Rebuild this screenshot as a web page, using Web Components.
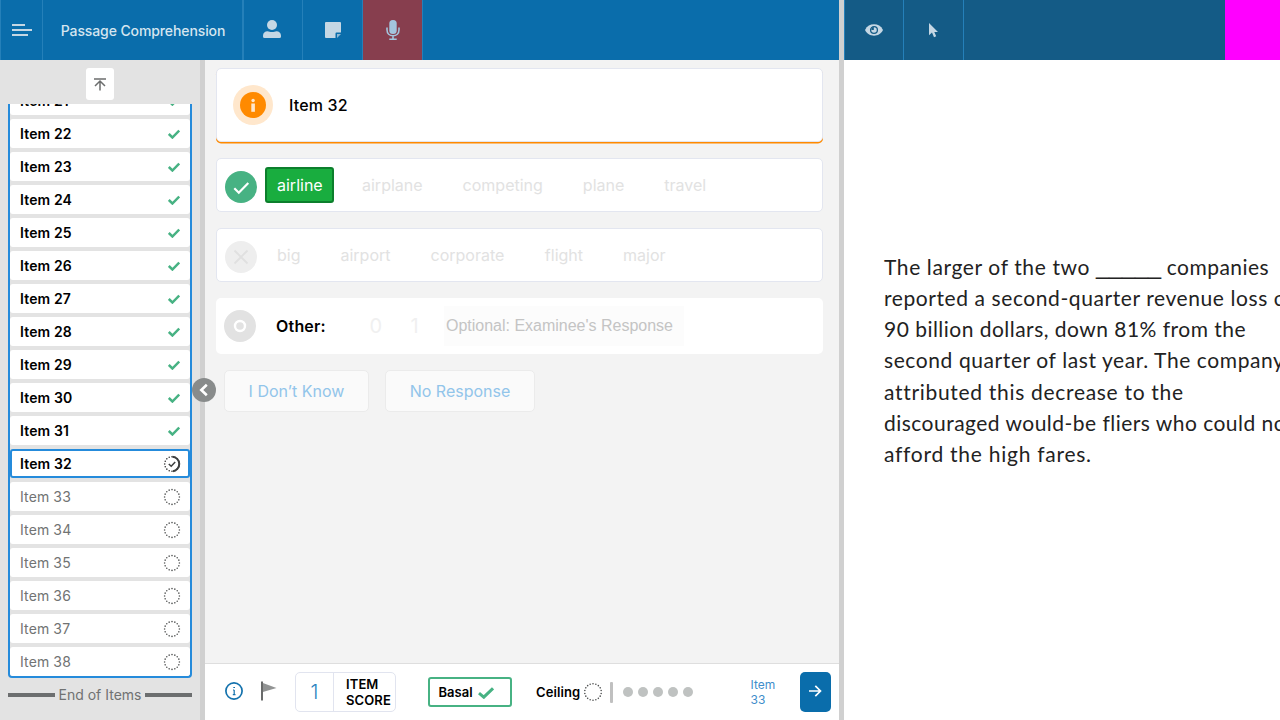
<!DOCTYPE html>
<html lang="en">
<head>
<meta charset="utf-8">
<title>Passage Comprehension</title>
<style>
html,body{margin:0;height:100%;overflow:hidden}
body{font-family:Inter,"Liberation Sans",sans-serif;color:#000}
</style>
</head>
<body>
<assessment-app></assessment-app>
<script>
function define(name, html, setup) {
  customElements.define(name, class extends HTMLElement {
    connectedCallback() {
      if (this.shadowRoot) return;
      const root = this.attachShadow({mode: 'open'});
      root.innerHTML = typeof html === 'function' ? html(this) : html;
      if (setup) setup(this, root);
    }
  });
}

/* Icons */
const dots = (r, n, c, size) => {
  let out = '';
  for (let i = 0; i < n; i++) {
    const a = 2 * Math.PI * i / n;
    out += `<circle cx="${(10 + r * Math.sin(a)).toFixed(2)}" cy="${(10 - r * Math.cos(a)).toFixed(2)}" r="${size}" fill="${c}"/>`;
  }
  return out;
};
const ICONS = {
  menu: [20, 12, '<path d="M0 1h13M0 6h20M0 11h16" stroke="#c5d7e4" stroke-width="2"/>'],
  person: [18, 18, '<circle cx="9" cy="5" r="5" fill="#c5d7e4"/><path d="M0 18v-2.200C0 13 2 11.300 4.500 11.300c1.500 0 2.500.8 4.500.8s3-.8 4.500-.8c2.500 0 4.500 1.700 4.500 4.500V16.500q0 1.500-1.500 1.500h-15Q0 18 0 16.500z" fill="#c5d7e4"/>'],
  note: [16, 16, '<path d="M0 1q0-1 1-1h14q1 0 1 1v9.500h-4.500q-1 0-1 1V16H1q-1 0-1-1z" fill="#c5d7e4"/><path d="M12 12h4l-4 4z" fill="#8fb9d5"/>'],
  mic: [14, 20, '<rect x="3.300" y="0" width="7.400" height="14" rx="3.500" fill="#a3c5de"/><path d="M1 7.500v2.300c0 3.800 2.600 6 6 6s6-2.200 6-6V7.500M7 15.800v3M3.300 19.200h7.400" fill="none" stroke="#a3c5de" stroke-width="1.600"/>'],
  eye: [18, 12, '<path d="M0 6C2 2 5.200 .3 9 .3S16 2 18 6c-2 4-5.200 5.700-9 5.700S2 10 0 6z" fill="#c5d7e4"/><circle cx="9" cy="6" r="3.400" fill="#c5d7e4" stroke="#145b86" stroke-width="1.300"/><path d="M8.800 3v3H6.500A2.500 2.500 0 0 1 8.800 3z" fill="#145b86"/>'],
  cursor: [9, 15, '<path d="M0 0v12.300l3-2.700L5 14.300l2.200-1L5.300 9H9z" fill="#c5d7e4"/>'],
  top: [12, 13, '<path d="M0 1h12M6 12.500V3M1 8l5-5 5 5" fill="none" stroke="#6c6e6e" stroke-width="1.500"/>'],
  check: [12, 10, '<path d="M.8 5l3.600 3.500L11.200 1.500" fill="none" stroke="#47b283" stroke-width="2.500"/>'],
  todo: [20, 20, dots(7.4, 16, '#555757', .8)],
  partial: [20, 20, dots(7.3, 16, '#333', .8) + '<path d="M10.500 2.700a7.300 7.300 0 0 1 .5 14.500" fill="none" stroke="#3c3e3e" stroke-width="2"/><path d="M6.800 10l2.400 2.300 4-4.300" fill="none" stroke="#3c3e3e" stroke-width="1.500"/>'],
  chevron: [24, 24, '<circle cx="12" cy="12" r="12" fill="#888b8b"/><path d="M14.800 6.800L9.300 12l5.500 5.200" fill="none" stroke="#fff" stroke-width="2.600"/>'],
  alert: [40, 40, '<circle cx="20" cy="20" r="20" fill="#ffe7cc"/><circle cx="20" cy="20" r="13" fill="#ff8a00"/><path d="M18.300 18.500h3.600v8.300h-3.600z" fill="#ffe7cc"/><circle cx="20.100" cy="15.500" r="1.700" fill="#ffe7cc"/>'],
  right: [32, 32, '<circle cx="16" cy="16" r="16" fill="#47b283"/><path d="M9.300 17.300l4.500 4.500L23.300 12" fill="none" stroke="#fff" stroke-width="2.200"/>'],
  wrong: [32, 32, '<circle cx="16" cy="16" r="16" fill="#eee"/><path d="M9.500 9.500l13 13M22.500 9.500l-13 13" stroke="#e0e0e0" stroke-width="1.900"/>'],
  other: [32, 32, '<circle cx="16" cy="16" r="16" fill="#e2e2e2"/><circle cx="16" cy="16" r="5" fill="none" stroke="#fff" stroke-width="2.400"/>'],
  info: [18, 18, '<circle cx="9" cy="9" r="8.100" fill="none" stroke="#1472ad" stroke-width="1.700"/><path d="M9.200 8v5M8 8h1.200M7.800 12.600h2.700M8.300 5.500h1.700" fill="none" stroke="#1472ad" stroke-width="1.200"/>'],
  flag: [16, 20, '<path d="M1.900 2l13.600 5L1.900 11z" fill="#929494"/><path d="M1 .5v19" stroke="#626464" stroke-width="1.900"/>'],
  bigcheck: [16, 12, '<path d="M1 6.200l4.800 4L15 1.300" fill="none" stroke="#47b283" stroke-width="3"/>'],
  ceiling: [20, 20, dots(8.3, 18, '#505252', .8)],
  next: [13, 12, '<path d="M0 6h11.500M6.300 .8L11.500 6l-5.200 5.200" fill="none" stroke="#fff" stroke-width="1.700"/>']
};
define('ui-icon', el => {
  const [w, h, body] = ICONS[el.getAttribute('name')];
  return `<style>:host{display:block;flex:none;width:${w}px;height:${h}px}svg{display:block}</style><svg width="${w}" height="${h}" viewBox="0 0 ${w} ${h}">${body}</svg>`;
});

define('assessment-app', `<style>
:host{display:grid;grid-template-columns:839px 5px 436px;width:1280px;height:720px;overflow:hidden}
.left{display:grid;grid-template-rows:60px 660px;min-width:0}
.body{display:grid;grid-template-columns:200px 5px 634px;position:relative}
.bar{background:#d0d0d0}
.collapse{position:absolute;left:192px;top:318px}
</style>
<div class="left"><examiner-header></examiner-header>
<div class="body"><item-sidebar></item-sidebar><div class="bar"></div><scoring-panel></scoring-panel><ui-icon class="collapse" name="chevron"></ui-icon></div></div>
<div class="bar"></div><examinee-view></examinee-view>`);

define('header-cell', `<style>
:host{display:flex;align-items:center;justify-content:center;box-sizing:border-box;height:60px;border-right:1px solid var(--line,#2580b9)}
</style><slot></slot>`);

define('examiner-header', `<style>
:host{display:flex;background:#0a6dab;color:#d5e5f0;font-size:14px;font-weight:500}
.menu{width:43px;border-left:1px solid #2580b9}
.title{width:201px;padding-left:1px;border-right-width:2px}
.title span{padding-top:1px;white-space:nowrap}
.cell{width:60px}.mic{background:#873e4e;width:60px}
.p{width:59px}.p ui-icon{margin:-2px 2px 0 0}
</style><header-cell class="menu"><ui-icon name="menu"></ui-icon></header-cell><header-cell class="title"><span><fit-text w="164.500">Passage Comprehension</fit-text></span></header-cell><header-cell class="cell p"><ui-icon name="person"></ui-icon></header-cell><header-cell class="cell"><ui-icon name="note"></ui-icon></header-cell><header-cell class="mic"><ui-icon name="mic"></ui-icon></header-cell>`);

define('list-item', el => {
  const s = el.getAttribute('state');
  return `<style>
:host{display:flex;flex:none;align-items:center;justify-content:space-between;box-sizing:border-box;height:29px;margin-bottom:4px;padding:0 ${s === 'check' ? 10 : 8}px 0 10px;background:#fff;border-radius:3px;font-size:14px;line-height:18px;font-weight:${s === 'todo' ? 400 : 600};color:${s === 'todo' ? '#717373' : '#000'}}
:host([state=partial]){border:2px solid #258bdb;padding:0 6px 0 8px}
span{padding-top:1px;letter-spacing:.12px}ui-icon{margin-top:1px}
</style><span>Item ${el.getAttribute('n')}</span><ui-icon name="${s}"></ui-icon>`;
});

define('item-sidebar', () => {
  let items = '';
  for (let n = 21; n <= 38; n++) items += `<list-item n="${n}" state="${n < 32 ? 'check' : n === 32 ? 'partial' : 'todo'}"></list-item>`;
  return `<style>
:host{display:flex;flex-direction:column;align-items:center;background:#e3e3e3;color:#707272}
.top{display:flex;align-items:center;justify-content:center;width:28px;height:32px;margin-top:8px;border-radius:3px;background:#fff}
.list{box-sizing:border-box;width:184px;height:574px;margin-top:4px;overflow:hidden;border:2px solid #258bdb;border-top:0;border-radius:0 0 4px 4px}
list-item:first-child{margin-top:-18px}list-item:last-child{margin-bottom:0}
.end{display:flex;align-items:center;justify-content:space-between;width:184px;height:34px;font-size:14px}
.end i{width:47px;height:4px;background:#6c6e6f}
.end span{margin-top:-1px}
</style><div class="top"><ui-icon name="top"></ui-icon></div><div class="list">${items}</div><div class="end"><i></i><span>End of Items</span><i></i></div>`;
});

define('word-option', `<style>
:host{display:flex;align-items:center;box-sizing:border-box;height:36px;padding:0 12px;color:#e2e2e2;font-size:16px;border-radius:3px}
:host([selected]){width:69px;background:#19ad3f;border:2px solid #0c7f2c;padding:0 10px;color:#fff}
</style><slot></slot>`);

define('word-row', el => `<style>
:host{display:flex;align-items:center;box-sizing:border-box;height:54px;padding:0 8px;background:#fff;border:1px solid #e3e6f0;border-radius:5px}
ui-icon{margin:3px 8px 0 0}.words{display:flex;gap:16px;margin-top:-1px}
</style><ui-icon name="${el.getAttribute('icon')}"></ui-icon><div class="words"><slot></slot></div>`);

define('scoring-panel', `<style>
:host{display:grid;grid-template-rows:603px 57px;background:#f3f3f3}
.content{display:flex;flex-direction:column;gap:16px;padding:8px 16px 0 11px}
.head{display:flex;align-items:center;gap:16px;box-sizing:border-box;height:74px;padding:0 16px;background:#fff;border:1px solid #e3e6f0;border-radius:5px;box-shadow:0 1.500px 0 #ff8a00;font-size:16px;font-weight:500;letter-spacing:.15px}
.other{display:flex;align-items:center;height:56px;padding-left:8px;background:#fff;border-radius:5px}
.other b{font-size:16px;font-weight:600;width:93.500px;margin-left:20px;letter-spacing:.2px}
.other .n{font-size:20px;color:#f0f0f0;width:41px}
.field{display:flex;align-items:center;box-sizing:border-box;width:240px;height:40px;margin-left:-7.500px;padding-left:2px;background:#fcfcfc;color:#c4c4c4;font:16px "Liberation Sans",sans-serif}
.buttons{display:flex;gap:16px;padding-left:8px}
.buttons div{display:flex;align-items:center;justify-content:center;box-sizing:border-box;height:42px;width:145px;background:#fafafa;border:1px solid #ebebeb;border-radius:5px;color:#92c5ea;font-size:16px}
.buttons div+div{width:150px}
</style><div class="content">
<div class="head"><ui-icon name="alert"></ui-icon><span>Item 32</span></div>
<word-row icon="right"><word-option selected>airline</word-option><word-option>airplane</word-option><word-option>competing</word-option><word-option>plane</word-option><word-option>travel</word-option></word-row>
<word-row icon="wrong"><word-option>big</word-option><word-option>airport</word-option><word-option style="padding-right:12.500px">corporate</word-option><word-option>flight</word-option><word-option>major</word-option></word-row>
<div class="other"><ui-icon name="other"></ui-icon><b>Other:</b><span class="n">0</span><span class="n">1</span><div class="field"><fit-text w="227">Optional: Examinee's Response</fit-text></div></div>
<div class="buttons"><div>I Don’t Know</div><div>No Response</div></div>
</div><score-footer></score-footer>`);

define('score-footer', `<style>
:host{display:flex;align-items:center;box-sizing:border-box;height:57px;background:#fff;border-top:1px solid #dedede;padding-left:20px;font-size:13px}
.info{margin-top:-3px}.flag{margin:-2px 0 0 18px}
.score{display:flex;box-sizing:border-box;width:101px;height:40px;margin-left:18px;border:1px solid #e1e4ef;border-radius:5px}
.score .v{display:flex;align-items:center;justify-content:center;width:37px;border-right:1px solid #e1e4ef;font-size:20px;font-weight:300;color:#277fc0}
.score .l{padding:3px 0 0 12px;font-weight:600;line-height:16px;letter-spacing:.1px}
.basal{display:flex;align-items:center;gap:5px;box-sizing:border-box;width:84px;height:30px;margin-left:32px;padding-left:8.500px;border:2px solid #47b283;border-radius:3px;font-weight:600}
.basal ui-icon{margin-top:2px}
.ceil{margin-left:24px;font-weight:600;width:47px;letter-spacing:.1px}
.bar{width:3px;height:21px;background:#c0c0c0;border-radius:1px;margin:0 10px 0 7px}
.dots{display:flex;gap:5px}.dots i{width:10px;height:10px;border-radius:50%;background:#bfc2c1}
.next{width:49.500px;margin-left:57.500px;color:#3f8ecb;font-size:12px;line-height:15px}
.go{display:flex;align-items:center;justify-content:center;width:31px;height:40px;border-radius:5px;background:#0a6dab}.go ui-icon{margin-top:-2px}
</style><ui-icon class="info" name="info"></ui-icon><ui-icon class="flag" name="flag"></ui-icon>
<div class="score"><div class="v">1</div><div class="l">ITEM<br>SCORE</div></div>
<div class="basal"><span>Basal</span><ui-icon name="bigcheck"></ui-icon></div>
<span class="ceil">Ceiling</span><ui-icon name="ceiling"></ui-icon><div class="bar"></div><div class="dots"><i></i><i></i><i></i><i></i><i></i></div>
<div class="next">Item<br>33</div><div class="go"><ui-icon name="next"></ui-icon></div>`);

define('examinee-view', `<style>
:host{display:grid;grid-template-columns:minmax(0,1fr);grid-template-rows:60px 660px;background:#fff;min-width:0;overflow:hidden}
.head{display:flex;background:#145b86}
.eye{width:60px;border-left:1px solid #2580b9}.cur{width:60px}
.head .magenta{width:55px;margin-left:auto;background:#f0f}
.text{padding:191px 0 0 40px;font:21px/31.200px Lato,sans-serif;color:#222;white-space:nowrap}
.text div{display:flex;height:31.150px}
.blank{font-family:"Liberation Sans",sans-serif;font-size:23.500px;font-weight:400}
</style><div class="head"><header-cell class="eye"><ui-icon name="eye"></ui-icon></header-cell><header-cell class="cur"><ui-icon name="cursor"></ui-icon></header-cell><div class="magenta"></div></div>
<div class="text">
<div><fit-text w="212">The larger of the two </fit-text><fit-text class="blank" w="65">_____</fit-text><fit-text w="108"> companies</fit-text></div>
<div><fit-text w="410">reported a second-quarter revenue loss of</fit-text></div>
<div><fit-text w="362">90 billion dollars, down 81% from the</fit-text></div>
<div><fit-text w="400.500">second quarter of last year. The company</fit-text></div>
<div><fit-text w="299">attributed this decrease to the</fit-text></div>
<div><fit-text w="410">discouraged would-be fliers who could not</fit-text></div>
<div><fit-text w="207">afford the high fares.</fit-text></div>
</div>`);

/* Spreads its text over a given measure by tracking. */
define('fit-text', '<style>:host{display:block;flex:none}span{display:inline-block;white-space:pre}</style><span><slot></slot></span>', (el, root) => {
  const span = root.querySelector('span'), w = +el.getAttribute('w');
  span.style.letterSpacing = (w - span.getBoundingClientRect().width) / el.textContent.length + 'px';
  el.style.width = w + 'px';
});
</script>
</body>
</html>
